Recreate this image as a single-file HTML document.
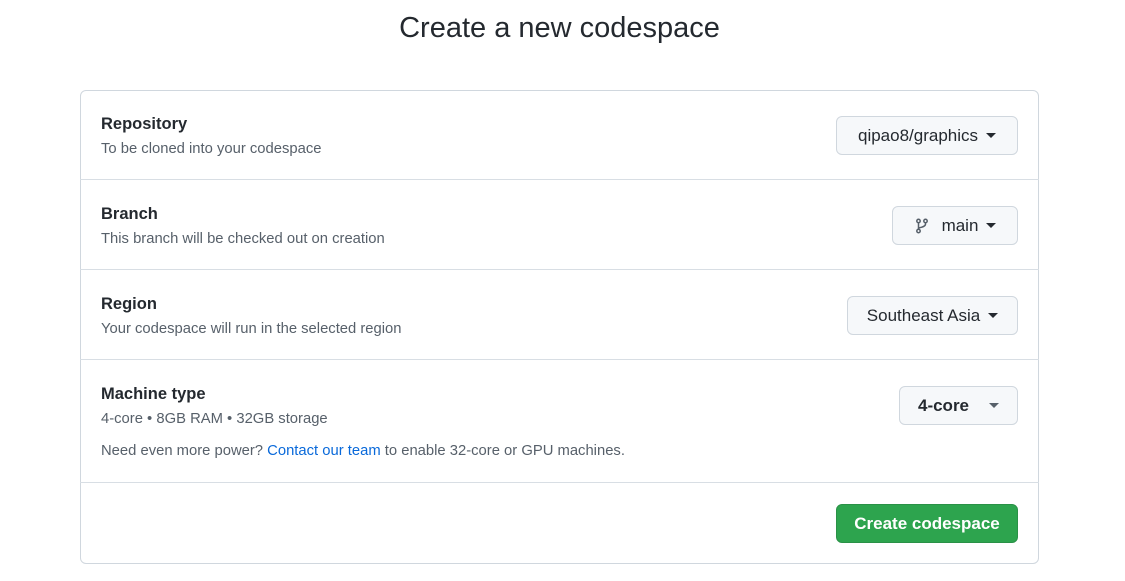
<!DOCTYPE html>
<html><head><meta charset="utf-8"><style>
*{box-sizing:border-box;margin:0;padding:0}
body{width:1125px;height:581px;background:#fff;font-family:"Liberation Sans",sans-serif;color:#24292f;position:relative;overflow:hidden}
.t{position:absolute;left:0;width:1119px;text-align:center;top:12px;font-size:29px;color:#24292f}
.box{position:absolute;left:80px;top:90px;width:959px;height:474px;border:1px solid #d0d7de;border-radius:6px}
.sep{position:absolute;left:80px;width:959px;height:1px;background:#d8dee4}
.h{position:absolute;left:101px;font-size:16.5px;font-weight:600}
.s{position:absolute;left:101px;font-size:14.8px;color:#57606a}
.b{position:absolute;height:39px;border:1px solid #d0d7de;border-radius:6px;background:#f6f8fa;font-size:17px;display:flex;align-items:center;justify-content:center;gap:6px}
.c{display:inline-block;width:0;height:0;border-left:5px solid transparent;border-right:5px solid transparent;border-top:5px solid #24292f;margin-left:2px}
a{color:#0969da;text-decoration:none}
</style></head><body>
<div class="t">Create a new codespace</div>
<div class="box"></div>
<div class="sep" style="top:179px"></div>
<div class="sep" style="top:269px"></div>
<div class="sep" style="top:359px"></div>
<div class="sep" style="top:482px"></div>

<div class="h" style="top:115px">Repository</div>
<div class="s" style="top:141px">To be cloned into your codespace</div>
<div class="b" style="left:836px;top:116px;width:182px">qipao8/graphics <span class="c"></span></div>

<div class="h" style="top:205px">Branch</div>
<div class="s" style="top:231px">This branch will be checked out on creation</div>
<div class="b" style="left:892px;top:206px;width:126px"><svg width="16" height="16" viewBox="0 0 16 16" fill="none" stroke="#57606a" stroke-width="1.5"><circle cx="4.5" cy="3" r="1.7"/><circle cx="4.5" cy="13" r="1.7"/><circle cx="11.5" cy="3" r="1.7"/><path d="M4.5 4.7v6.6M11.5 4.7v1.3c0 2-2 3-7 4"/></svg><span style="margin-left:6px">main</span> <span class="c"></span></div>

<div class="h" style="top:295px">Region</div>
<div class="s" style="top:321px">Your codespace will run in the selected region</div>
<div class="b" style="left:847px;top:296px;width:171px">Southeast Asia <span class="c"></span></div>

<div class="h" style="top:385px">Machine type</div>
<div class="s" style="top:411px">4-core • 8GB RAM • 32GB storage</div>
<div class="s" style="top:443px">Need even more power? <a>Contact our team</a> to enable 32-core or GPU machines.</div>
<div class="b" style="left:899px;top:386px;width:119px;font-weight:600;gap:18px">4-core <span class="c" style="border-top-color:#57606a"></span></div>

<div class="b" style="left:836px;top:504px;width:182px;background:#2da44e;border-color:#2a9147;color:#fff;font-weight:600">Create codespace</div>
</body></html>
